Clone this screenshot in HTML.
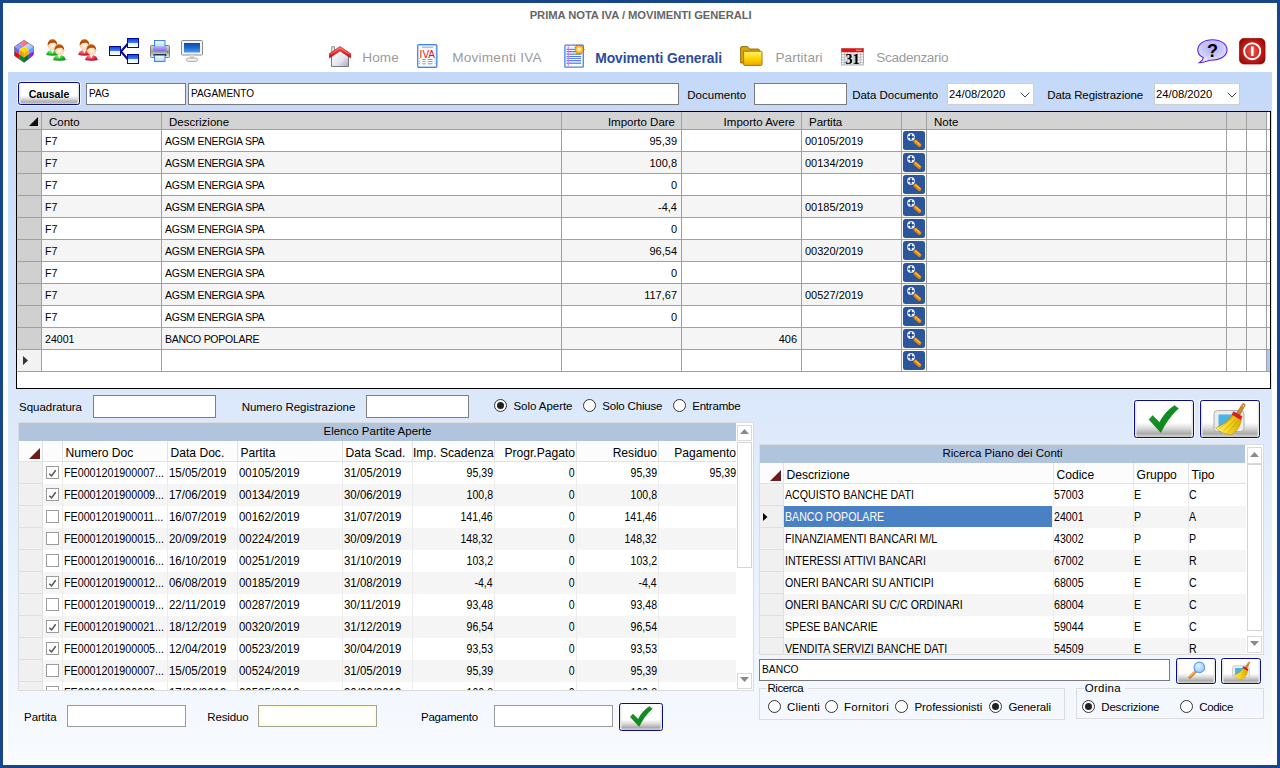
<!DOCTYPE html><html lang="it"><head><meta charset="utf-8"><title>Prima Nota IVA / Movimenti Generali</title><style>
*{box-sizing:border-box;margin:0;padding:0}
html,body{width:1280px;height:768px;overflow:hidden;background:#fff}
body{position:relative;font-family:"Liberation Sans",sans-serif;font-size:11.5px;color:#000}
.abs{position:absolute}
#frame{position:absolute;left:0;top:0;width:1280px;height:768px;border:3px solid #18468b;pointer-events:none;z-index:50}
#panel{position:absolute;left:8px;top:72px;width:1264px;height:688px;background:linear-gradient(to bottom,#c4d9f8 0%,#dbe8fb 47%,#f8fbff 100%)}
.t{position:absolute;white-space:nowrap;line-height:14px;height:14px}
.lbl{font-size:11.5px;color:#000}
.nav{font-size:13.6px;color:#9b9b9b;line-height:16px;height:16px}
.in{position:absolute;background:#fff;border:1px solid #7a7a7a}
.btn{position:absolute;border:1px solid #0b0b8e;border-radius:2.5px;background:linear-gradient(to bottom,#fff 0%,#fff 60%,#dcdcdc 75%,#aaa 91%,#c2c2be 95%,#cfcfca 100%);box-shadow:inset 1.5px 0 0 #e6e6e2,inset -1.5px 0 0 #e6e6e2,0 0 0 1px rgba(255,255,255,.65)}
/* top grid */
#g1{position:absolute;left:16px;top:111px;width:1255px;height:278px;border:1px solid #000;background:#fff;overflow:hidden}
#g1 .c{position:absolute;border-right:1px solid #a0a0a0;border-bottom:1px solid #a0a0a0;height:22px;font-size:11px;line-height:23px;white-space:nowrap;overflow:hidden}
#g1 .h{background:#d3d3d3;height:18px;line-height:21px;font-size:11.5px}
#g1 .rh{background:#d0d0d0}
#g1 .alt{background:#f5f5f5}
#g1 .r{text-align:right;padding-right:4px}
#g1 .l{padding-left:3px}
.zb{position:absolute;left:1px;top:1px;width:22px;height:19px;border-radius:2.5px;background:#2b579a}
/* lower grids */
.g2{position:absolute;background:#fff;border:1px solid #dcdcdc;overflow:hidden}
.g2 .band{position:absolute;left:0;top:0;height:18px;background:#b0c4de;text-align:center;font-size:11.5px;line-height:17px}
.g2 .c{position:absolute;height:22px;font-size:11.4px;line-height:22px;white-space:nowrap;overflow:hidden;border-right:1px solid #ececec}
.g2 .h{background:#fcfcfc;height:21px;line-height:24px;font-size:12.1px;border-bottom:1px solid #e2e2e2;border-right:1px solid #e2e2e2}
.g2 .rh{background:#f0f0f0;border-right:1px solid #e0e0e0;border-bottom:1px solid #e0e0e0}
.g2 .alt{background:#f5f5f5}
.g2 .r{text-align:right;padding-right:1px}
.g2 .d{display:inline-block}
.g2 .nd{font-size:12px;transform:scaleX(.892);transform-origin:0 50%}
.g2 .dd{font-size:12px;transform:scaleX(.955);transform-origin:0 50%}
.g2 .dr{font-size:12px;transform:scaleX(.88);transform-origin:100% 50%}
.g2 .ds{font-size:12px;transform:scaleX(.885);transform-origin:0 50%}
.g2 .dn{margin-left:-.6px;font-size:12px;transform:scaleX(.885);transform-origin:0 50%}
.g2 .l{padding-left:1px}
.g2 .h.l{padding-left:2.5px}
.cb{position:absolute;width:13px;height:13px;border:1px solid #9c9c9c;background:#fff}
.sb{position:absolute;background:#fff;border:1px solid #d4d4d4}
.sbb{position:absolute;background:#fff;border:1px solid #d9d9d9}
.radio{position:absolute;width:13px;height:13px;border:1px solid #333;border-radius:50%;background:#fff}
.radio.on::after{content:"";position:absolute;left:2px;top:2px;width:7px;height:7px;border-radius:50%;background:#222}
.grp{position:absolute;border:1px solid #dcdcdc}
</style></head><body>
<svg width="0" height="0" style="position:absolute"><defs>
<linearGradient id="gBox" x1="0" y1="0" x2="0" y2="1"><stop offset="0" stop-color="#0a3fe0"/><stop offset=".45" stop-color="#3f78f0"/><stop offset=".55" stop-color="#e8f0ff"/><stop offset="1" stop-color="#fff"/></linearGradient>
<radialGradient id="gSkin" cx=".5" cy=".55" r=".6"><stop offset="0" stop-color="#fff6ea"/><stop offset=".6" stop-color="#fbd9b5"/><stop offset="1" stop-color="#e9a66a"/></radialGradient>
<radialGradient id="gGreen" cx=".4" cy=".3" r=".8"><stop offset="0" stop-color="#7df07a"/><stop offset=".6" stop-color="#18b51c"/><stop offset="1" stop-color="#0a7a10"/></radialGradient>
<radialGradient id="gRed" cx=".4" cy=".3" r=".8"><stop offset="0" stop-color="#ff8a9a"/><stop offset=".6" stop-color="#e0203a"/><stop offset="1" stop-color="#a00a20"/></radialGradient>
<linearGradient id="gHair" x1="0" y1="0" x2="0" y2="1"><stop offset="0" stop-color="#c8600a"/><stop offset="1" stop-color="#8a3a05"/></linearGradient>
<radialGradient id="gPow" cx=".5" cy=".5" r=".6"><stop offset="0" stop-color="#f06050"/><stop offset=".55" stop-color="#c8201a"/><stop offset="1" stop-color="#980808"/></radialGradient>
<radialGradient id="gHelp" cx=".5" cy=".35" r=".7"><stop offset="0" stop-color="#a8a8f8"/><stop offset=".6" stop-color="#d0d0fb"/><stop offset="1" stop-color="#f4f4ff"/></radialGradient>
<linearGradient id="gFold" x1="0" y1="0" x2="0" y2="1"><stop offset="0" stop-color="#fff27a"/><stop offset=".5" stop-color="#ffd700"/><stop offset="1" stop-color="#f0a400"/></linearGradient>
<linearGradient id="gScr" x1="0" y1="0" x2="0" y2="1"><stop offset="0" stop-color="#0a4ab0"/><stop offset=".5" stop-color="#1c6ad0"/><stop offset="1" stop-color="#4a9af0"/></linearGradient>
<linearGradient id="gWall" x1="0" y1="0" x2="1" y2="1"><stop offset="0" stop-color="#fff"/><stop offset=".6" stop-color="#e4e4ee"/><stop offset="1" stop-color="#a8a8c0"/></linearGradient>
<linearGradient id="gRoof" x1="0" y1="0" x2="0" y2="1"><stop offset="0" stop-color="#ff5a5a"/><stop offset="1" stop-color="#c80000"/></linearGradient>
<linearGradient id="gPrn" x1="0" y1="0" x2="0" y2="1"><stop offset="0" stop-color="#d8d8d8"/><stop offset=".5" stop-color="#a0a0a0"/><stop offset="1" stop-color="#e8e8e8"/></linearGradient>
<linearGradient id="gPap" x1="0" y1="0" x2="0" y2="1"><stop offset="0" stop-color="#fff"/><stop offset="1" stop-color="#a8d4ff"/></linearGradient>
<linearGradient id="gLav" x1="0" y1="0" x2="0" y2="1"><stop offset="0" stop-color="#b8a8f8"/><stop offset="1" stop-color="#7a6ae0"/></linearGradient>
<linearGradient id="gChk" x1="0" y1="0" x2="1" y2="1"><stop offset="0" stop-color="#18a028"/><stop offset="1" stop-color="#0a7a18"/></linearGradient>
<radialGradient id="gLens" cx=".4" cy=".35" r=".7"><stop offset="0" stop-color="#e8f4ff"/><stop offset="1" stop-color="#8ec0ff"/></radialGradient>
<linearGradient id="gBroom" x1="0" y1="0" x2="1" y2="0"><stop offset="0" stop-color="#fff080"/><stop offset=".5" stop-color="#f8d820"/><stop offset="1" stop-color="#d8a800"/></linearGradient>
<linearGradient id="cPink" x1="0" y1="0" x2="1" y2="1"><stop offset="0" stop-color="#ffa0a4"/><stop offset="1" stop-color="#f85058"/></linearGradient>
<linearGradient id="cPeri" x1="0" y1="0" x2="1" y2="1"><stop offset="0" stop-color="#b4b4ff"/><stop offset="1" stop-color="#7c7cf0"/></linearGradient>
<linearGradient id="cSky" x1="0" y1="0" x2="1" y2="1"><stop offset="0" stop-color="#d8ecff"/><stop offset="1" stop-color="#78b4ff"/></linearGradient>
<linearGradient id="cYel" x1="0" y1="0" x2="1" y2="1"><stop offset="0" stop-color="#fff000"/><stop offset="1" stop-color="#ffc400"/></linearGradient>
</defs></svg>
<div id="panel"></div>
<div class="t ttl" style="left:529.7px;top:8px;font-weight:bold;font-size:11.2px;color:#666;letter-spacing:.02px;letter-spacing:-0.04px">PRIMA NOTA IVA / MOVIMENTI GENERALI</div>
<svg class="abs" style="left:14px;top:39.5px;" width="20" height="23" viewBox="0 0 20 23"><polygon points="10.06,0.3 14.75,3.34 10.06,6.46 5.18,3.34" fill="url(#cPink)"/><polygon points="5.18,3.34 10.06,6.46 5.18,9.59 0.4,6.85" fill="url(#cPeri)"/><polygon points="14.75,3.34 19.6,6.46 14.75,9.59 10.06,6.46" fill="url(#cSky)"/><polygon points="10.06,6.46 14.75,9.59 10.06,12.7 5.18,9.59" fill="url(#cYel)"/><polygon points="0.4,6.85 5.18,9.59 5.18,14.08 0.4,11.27" fill="#6a68e2"/><polygon points="5.18,9.59 10.06,12.7 10.06,17.6 5.18,14.08" fill="#f0a200"/><polygon points="0.4,11.27 5.18,14.08 5.18,18.96 0.4,15.64" fill="#f00608"/><polygon points="5.18,14.08 10.06,17.6 10.06,22.4 5.18,18.96" fill="#0a8a2a"/><polygon points="10.06,12.7 14.75,9.59 14.75,14.08 10.06,17.6" fill="#ffb400"/><polygon points="14.75,9.59 19.6,6.46 19.6,10.95 14.75,14.08" fill="#5ea4ff"/><polygon points="10.06,17.6 14.75,14.08 14.75,18.96 10.06,22.4" fill="#087024"/><polygon points="14.75,14.08 19.6,10.95 19.6,14.86 14.75,18.96" fill="#8a22ff"/><polygon points="10.06,0.3 19.6,6.46 19.6,14.86 10.06,22.4 0.4,15.64 0.4,6.85" fill="none" stroke="#4a4a78" stroke-width=".7" stroke-opacity=".8"/></svg>
<svg class="abs" style="left:46px;top:39px;" width="22" height="23" viewBox="0 0 22 23"><ellipse cx="14" cy="20.8" rx="8" ry="1.5" fill="#000" opacity=".13"/><path d="M0.40000000000000036,16.1 Q0.40000000000000036,11.1 6.5,10.9 Q12.6,11.1 12.6,16.1 Q6.5,17.3 0.40000000000000036,16.1Z" fill="url(#gGreen)"/>
<polygon points="4.8,10.7 8.2,10.7 6.5,14.5" fill="#fff"/>
<ellipse cx="6.5" cy="6.4" rx="4.4" ry="4.9" fill="url(#gSkin)"/>
<path d="M1.7000000000000002,6.9 C1.0999999999999996,-1.9000000000000004 11.9,-1.9000000000000004 11.3,6.9 C10.5,3.5 7.5,3.7 5.5,3.9 C3.5,4.1 2.3,5.1 1.7000000000000002,6.9Z" fill="url(#gHair)"/><path d="M7.300000000000001,21.1 Q7.300000000000001,16.1 13.4,15.9 Q19.5,16.1 19.5,21.1 Q13.4,22.3 7.300000000000001,21.1Z" fill="url(#gGreen)"/>
<polygon points="11.700000000000001,15.7 15.1,15.7 13.4,19.5" fill="#fff"/>
<ellipse cx="13.4" cy="11.4" rx="4.4" ry="4.9" fill="url(#gSkin)"/>
<path d="M8.600000000000001,11.9 C8.0,3.0999999999999996 18.8,3.0999999999999996 18.2,11.9 C17.4,8.5 14.4,8.7 12.4,8.9 C10.4,9.1 9.2,10.1 8.600000000000001,11.9Z" fill="url(#gHair)"/></svg>
<svg class="abs" style="left:78px;top:39px;" width="22" height="23" viewBox="0 0 22 23"><ellipse cx="14" cy="20.8" rx="8" ry="1.5" fill="#000" opacity=".13"/><path d="M0.40000000000000036,16.1 Q0.40000000000000036,11.1 6.5,10.9 Q12.6,11.1 12.6,16.1 Q6.5,17.3 0.40000000000000036,16.1Z" fill="url(#gRed)"/>
<polygon points="4.8,10.7 8.2,10.7 6.5,14.5" fill="#fff"/>
<ellipse cx="6.5" cy="6.4" rx="4.4" ry="4.9" fill="url(#gSkin)"/>
<path d="M1.7000000000000002,6.9 C1.0999999999999996,-1.9000000000000004 11.9,-1.9000000000000004 11.3,6.9 C10.5,3.5 7.5,3.7 5.5,3.9 C3.5,4.1 2.3,5.1 1.7000000000000002,6.9Z" fill="url(#gHair)"/><path d="M7.300000000000001,21.1 Q7.300000000000001,16.1 13.4,15.9 Q19.5,16.1 19.5,21.1 Q13.4,22.3 7.300000000000001,21.1Z" fill="url(#gRed)"/>
<polygon points="11.700000000000001,15.7 15.1,15.7 13.4,19.5" fill="#fff"/>
<ellipse cx="13.4" cy="11.4" rx="4.4" ry="4.9" fill="url(#gSkin)"/>
<path d="M8.600000000000001,11.9 C8.0,3.0999999999999996 18.8,3.0999999999999996 18.2,11.9 C17.4,8.5 14.4,8.7 12.4,8.9 C10.4,9.1 9.2,10.1 8.600000000000001,11.9Z" fill="url(#gHair)"/></svg>
<svg class="abs" style="left:109px;top:38px;" width="30" height="26" viewBox="0 0 30 26"><path d="M12,13.5 L19,5.5 M12,13.5 L19,21.5" stroke="#0a0a8c" stroke-width="2.1" fill="none"/>
<rect x=".5" y="8.5" width="11" height="9" fill="url(#gBox)" stroke="#000a96" stroke-width="1"/>
<rect x="18.5" y=".5" width="11" height="9" fill="url(#gBox)" stroke="#000a96" stroke-width="1"/>
<rect x="18.5" y="16.5" width="11" height="9" fill="url(#gBox)" stroke="#000a96" stroke-width="1"/></svg>
<svg class="abs" style="left:150px;top:40px;" width="21" height="23" viewBox="0 0 21 23"><rect x=".5" y="5.5" width="19" height="12" rx="1" fill="url(#gPrn)" stroke="#666" stroke-width=".8"/>
<rect x="4.5" y=".5" width="10.5" height="7" fill="url(#gPap)" stroke="#2a7af0" stroke-width=".9"/>
<rect x="3.2" y="6.5" width="13.4" height="5" rx="1.5" fill="url(#gLav)"/>
<rect x="3.5" y="14" width="12.8" height="2" fill="#222"/>
<rect x="4.5" y="15.2" width="10.5" height="6.3" fill="url(#gPap)" stroke="#2a7af0" stroke-width=".9"/>
<circle cx="17.6" cy="12" r=".9" fill="#30b020"/></svg>
<svg class="abs" style="left:181px;top:40px;" width="22" height="22" viewBox="0 0 22 22"><rect x=".5" y=".5" width="21" height="14.5" rx=".8" fill="#f4f4f4" stroke="#8c8c98" stroke-width="1"/>
<rect x="3" y="3" width="16" height="9.5" fill="url(#gScr)"/>
<path d="M9,15 h4 v3.5 h-4z" fill="#d8d8d8"/>
<rect x="5.5" y="18" width="11" height="3.4" rx="1.7" fill="#f0f0f0" stroke="#9a9aa6" stroke-width=".8"/></svg>
<svg class="abs" style="left:329px;top:46px;" width="22" height="21" viewBox="0 0 22 21"><rect x="2.8" y=".8" width="2.6" height="6" fill="#e8e8f0" stroke="#666" stroke-width=".7"/>
<path d="M2.5,9.5 L11,3.5 L19.5,9.5 V20.5 H2.5Z" fill="url(#gWall)" stroke="#5a5a66" stroke-width=".8"/>
<path d="M0.3,7.7 L11,.4 L21.7,7.7 L21.7,12.1 L11,4.9 L0.3,12.1Z" fill="url(#gRoof)" stroke="#b00000" stroke-width=".5"/><path d="M1.4,8.4 L11,1.9 L20.6,8.4" fill="none" stroke="#ffb0b0" stroke-width=".7" opacity=".8"/></svg>
<div class="t nav" style="left:362.3px;top:50px;;letter-spacing:0.045px">Home</div>
<svg class="abs" style="left:417.3px;top:44px;" width="21" height="24" viewBox="0 0 21 24"><rect x=".8" y=".8" width="19" height="22.4" rx="1" fill="#fff" stroke="#3a82f0" stroke-width="1.4"/>
<rect x="1.8" y="1.8" width="17" height="20.4" fill="none" stroke="#cfe2ff" stroke-width=".8"/>
<path d="M5,3.2 H16" stroke="#888" stroke-width=".8"/>
<text x="10.3" y="14.2" font-family="Liberation Sans, sans-serif" font-size="11.6" text-anchor="middle" fill="#e01020" textLength="15.4" lengthAdjust="spacingAndGlyphs">IVA</text>
<path d="M5.4,15.5 H8.6 M10.6,15.5 H15.6 M5.4,17.6 H8.6 M10.6,17.6 H15.6 M5.4,19.8 H8.6 M10.6,19.8 H15.6" stroke="#999" stroke-width="1"/>
<path d="M2.6,14.4 V20.6 M18,14.4 V20.6" stroke="#3a82f0" stroke-width=".7" stroke-dasharray=".8 1.6"/></svg>
<div class="t nav" style="left:452.2px;top:50px;;letter-spacing:0.231px">Movimenti IVA</div>
<svg class="abs" style="left:564px;top:44px;" width="22" height="24" viewBox="0 0 22 24"><rect x=".9" y="1.2" width="18.4" height="21.9" rx=".6" fill="#fff" stroke="#3f86f2" stroke-width="1.3"/>
<rect x="2.5" y="7.5" width="14.6" height="2.7" fill="#d4e2ff"/><rect x="2.5" y="16.6" width="14.6" height="2.7" fill="#d4e2ff"/><rect x="2.5" y="3" width="9" height="2.2" fill="#e4f0ff"/>
<path d="M2.5,5.4 H17.1 M2.5,7.5 H17.1 M2.5,10.2 H17.1 M2.5,12.5 H17.1 M2.5,14.4 H17.1 M2.5,16.6 H17.1 M2.5,19.3 H17.1" stroke="#4a78f0" stroke-width="1"/>
<path d="M4.3,1.8 V22.4" stroke="#e070f0" stroke-width=".9"/>
<polygon points="15.30,-0.50 16.26,1.83 18.25,0.29 17.92,2.78 20.41,2.45 18.87,4.44 21.20,5.40 18.87,6.36 20.41,8.35 17.92,8.02 18.25,10.51 16.26,8.97 15.30,11.30 14.34,8.97 12.35,10.51 12.68,8.02 10.19,8.35 11.73,6.36 9.40,5.40 11.73,4.44 10.19,2.45 12.68,2.78 12.35,0.29 14.34,1.83" fill="#ee5000"/>
<circle cx="15.3" cy="5.4" r="3.9" fill="#ff9a10"/><circle cx="15.3" cy="5.4" r="3" fill="#ffd820"/><circle cx="15.2" cy="5.3" r="1.7" fill="#fffbe0"/></svg>
<div class="t nav" style="left:595.2px;top:50px;font-weight:bold;color:#2b4c9c;font-size:13.85px;letter-spacing:-0.042px">Movimenti Generali</div>
<svg class="abs" style="left:740px;top:46px;" width="23" height="20" viewBox="0 0 23 20"><path d="M.6,2 Q.6,.6 2,.6 H7.5 L9.5,3 H18 Q19.5,3 19.5,4.5 V17 H.6Z" fill="#dca400" stroke="#8a6408" stroke-width=".9"/>
<path d="M3.6,5.2 H21 Q22,5.2 22,6.2 V18.2 Q22,19.4 21,19.4 H4.6 Q3.6,19.4 3.6,18.2Z" fill="url(#gFold)" stroke="#96700a" stroke-width=".9"/></svg>
<div class="t nav" style="left:775.5px;top:50px;;letter-spacing:0.032px">Partitari</div>
<svg class="abs" style="left:841.4px;top:47.6px;" width="23" height="18" viewBox="0 0 23 18"><rect x=".4" y=".4" width="22.2" height="16.6" fill="#f4f4f4" stroke="#888" stroke-width=".6"/>
<path d="M.4,6.5H22.6M.4,9.2H22.6M.4,11.9H22.6M.4,14.5H22.6M3.4,4V17M6.6,4V17M9.8,4V17M13,4V17M16.2,4V17M19.4,4V17" stroke="#999" stroke-width=".5"/>
<rect x=".4" y=".4" width="22.2" height="3.8" fill="#e81010"/>
<path d="M15,2.2 H20.5" stroke="#ffb0b0" stroke-width=".9"/>
<text x="11.5" y="15.6" font-family="Liberation Serif, serif" font-weight="bold" font-size="14.5" text-anchor="middle" fill="#000">31</text></svg>
<div class="t nav" style="left:876.2px;top:50px;;letter-spacing:-0.318px">Scadenzario</div>
<svg class="abs" style="left:1196.6px;top:38.6px;" width="31" height="25" viewBox="0 0 31 25"><path d="M15.5,.8 C24,.8 30,5 30,11 C30,17.5 22,21.6 13,21.2 C10.5,22 6,23.4 2.4,23.6 C5,21.8 6.2,20 6.2,18.6 C2.6,16.8 .8,14 .8,11 C.8,5 7,.8 15.5,.8Z" fill="url(#gHelp)" stroke="#5a20e8" stroke-width="1.1"/>
<text x="15.4" y="18.4" font-family="Liberation Sans, sans-serif" font-weight="bold" font-size="18" text-anchor="middle" fill="#000">?</text></svg>
<svg class="abs" style="left:1239px;top:37.8px;" width="27" height="27" viewBox="0 0 27 27"><rect x=".3" y=".3" width="25.8" height="25.8" rx="5" fill="url(#gPow)" stroke="#900" stroke-width=".6"/>
<circle cx="13.2" cy="13.2" r="8" fill="none" stroke="#fff" stroke-width="1.9"/>
<rect x="12" y="8.4" width="2.6" height="9.6" fill="#fff"/></svg>
<div class="btn" style="left:18px;top:82px;width:62px;height:23px;text-align:center;font-weight:bold;font-size:10.6px;line-height:22px">Causale</div>
<div class="in" style="left:86px;top:83px;width:100px;height:22px;"><span class="t" style="left:2px;top:3px;font-size:10px">PAG</span></div>
<div class="in" style="left:188px;top:83px;width:491px;height:22px;"><span class="t" style="left:2px;top:3px;font-size:10px">PAGAMENTO</span></div>
<div class="t lbl" style="left:687.2px;top:87.5px;;letter-spacing:0.023px">Documento</div>
<div class="in" style="left:754px;top:83px;width:93px;height:22px;"></div>
<div class="t lbl" style="left:852.2px;top:87.5px;;letter-spacing:-0.023px">Data Documento</div>
<div class="in" style="left:947px;top:83px;width:87px;height:22px;border-color:#cfcfcf"><span class="t" style="left:1px;top:3px;font-size:11.25px">24/08/2020</span><svg class="abs" style="left:72px;top:8px" width="10" height="6" viewBox="0 0 10 6"><path d="M.7,.7 L5,5 L9.3,.7" fill="none" stroke="#444" stroke-width="1"/></svg></div>
<div class="t lbl" style="left:1047.2px;top:87.5px;;letter-spacing:-0.107px">Data Registrazione</div>
<div class="in" style="left:1154px;top:83px;width:86px;height:22px;border-color:#cfcfcf"><span class="t" style="left:1px;top:3px;font-size:11.25px">24/08/2020</span><svg class="abs" style="left:72px;top:8px" width="10" height="6" viewBox="0 0 10 6"><path d="M.7,.7 L5,5 L9.3,.7" fill="none" stroke="#444" stroke-width="1"/></svg></div>
<div id="g1">
<div class="c h l" style="left:0px;top:0;width:25px;padding-left:7px"><svg class="abs" style="left:12px;top:5px" width="9" height="9" viewBox="0 0 9 9"><polygon points="9,0 9,9 0,9" fill="#111"/></svg></div>
<div class="c h l" style="left:25px;top:0;width:120px;padding-left:7px">Conto</div>
<div class="c h l" style="left:145px;top:0;width:400px;padding-left:7px">Descrizione</div>
<div class="c h r" style="left:545px;top:0;width:120px;padding-right:6px">Importo Dare</div>
<div class="c h r" style="left:665px;top:0;width:120px;padding-right:6px">Importo Avere</div>
<div class="c h l" style="left:785px;top:0;width:100px;padding-left:7px">Partita</div>
<div class="c h l" style="left:885px;top:0;width:25px;padding-left:7px"></div>
<div class="c h l" style="left:910px;top:0;width:300px;padding-left:7px">Note</div>
<div class="c h l" style="left:1210px;top:0;width:20px;padding-left:7px"></div>
<div class="c h l" style="left:1230px;top:0;width:20px;padding-left:7px"></div>
<div class="c h l" style="left:1250px;top:0;width:30px;padding-left:7px;background:#f8f8f8"></div>
<div class="c rh" style="left:0px;top:18px;width:25px;"></div>
<div class="c l" style="left:25px;top:18px;width:120px;font-size:10.6px;">F7</div>
<div class="c l" style="left:145px;top:18px;width:400px;font-size:10.5px;letter-spacing:-.27px;">AGSM ENERGIA SPA</div>
<div class="c r" style="left:545px;top:18px;width:120px;">95,39</div>
<div class="c r" style="left:665px;top:18px;width:120px;"></div>
<div class="c l" style="left:785px;top:18px;width:100px;">00105/2019</div>
<div class="c" style="left:885px;top:18px;width:25px;"><span class="zb"><svg width="22" height="19" viewBox="0 0 22 19" style="position:absolute;left:0;top:0"><path d="M12.3,10.5 L16.5,14.1" stroke="#e08a14" stroke-width="3.7" stroke-linecap="round"/><path d="M12.5,9.9 L16.9,13.6" stroke="#ffc050" stroke-width="1.2" stroke-linecap="round"/><circle cx="8" cy="5.9" r="4.6" fill="#2a3ec4"/><circle cx="8" cy="5.9" r="3.9" fill="#dcefff"/><circle cx="7.7" cy="5.5" r="2.7" fill="#fff"/><path d="M5.1,5.9H10.9M8,3V8.8" stroke="#0b3c80" stroke-width="1.5"/></svg></span></div>
<div class="c l" style="left:910px;top:18px;width:300px;"></div>
<div class="c l" style="left:1210px;top:18px;width:20px;"></div>
<div class="c l" style="left:1230px;top:18px;width:20px;"></div>
<div class="c l" style="left:1250px;top:18px;width:30px;"></div>
<div class="c rh" style="left:0px;top:40px;width:25px;"></div>
<div class="c alt l" style="left:25px;top:40px;width:120px;font-size:10.6px;">F7</div>
<div class="c alt l" style="left:145px;top:40px;width:400px;font-size:10.5px;letter-spacing:-.27px;">AGSM ENERGIA SPA</div>
<div class="c alt r" style="left:545px;top:40px;width:120px;">100,8</div>
<div class="c alt r" style="left:665px;top:40px;width:120px;"></div>
<div class="c alt l" style="left:785px;top:40px;width:100px;">00134/2019</div>
<div class="c alt" style="left:885px;top:40px;width:25px;"><span class="zb"><svg width="22" height="19" viewBox="0 0 22 19" style="position:absolute;left:0;top:0"><path d="M12.3,10.5 L16.5,14.1" stroke="#e08a14" stroke-width="3.7" stroke-linecap="round"/><path d="M12.5,9.9 L16.9,13.6" stroke="#ffc050" stroke-width="1.2" stroke-linecap="round"/><circle cx="8" cy="5.9" r="4.6" fill="#2a3ec4"/><circle cx="8" cy="5.9" r="3.9" fill="#dcefff"/><circle cx="7.7" cy="5.5" r="2.7" fill="#fff"/><path d="M5.1,5.9H10.9M8,3V8.8" stroke="#0b3c80" stroke-width="1.5"/></svg></span></div>
<div class="c alt l" style="left:910px;top:40px;width:300px;"></div>
<div class="c alt l" style="left:1210px;top:40px;width:20px;"></div>
<div class="c alt l" style="left:1230px;top:40px;width:20px;"></div>
<div class="c alt l" style="left:1250px;top:40px;width:30px;"></div>
<div class="c rh" style="left:0px;top:62px;width:25px;"></div>
<div class="c l" style="left:25px;top:62px;width:120px;font-size:10.6px;">F7</div>
<div class="c l" style="left:145px;top:62px;width:400px;font-size:10.5px;letter-spacing:-.27px;">AGSM ENERGIA SPA</div>
<div class="c r" style="left:545px;top:62px;width:120px;">0</div>
<div class="c r" style="left:665px;top:62px;width:120px;"></div>
<div class="c l" style="left:785px;top:62px;width:100px;"></div>
<div class="c" style="left:885px;top:62px;width:25px;"><span class="zb"><svg width="22" height="19" viewBox="0 0 22 19" style="position:absolute;left:0;top:0"><path d="M12.3,10.5 L16.5,14.1" stroke="#e08a14" stroke-width="3.7" stroke-linecap="round"/><path d="M12.5,9.9 L16.9,13.6" stroke="#ffc050" stroke-width="1.2" stroke-linecap="round"/><circle cx="8" cy="5.9" r="4.6" fill="#2a3ec4"/><circle cx="8" cy="5.9" r="3.9" fill="#dcefff"/><circle cx="7.7" cy="5.5" r="2.7" fill="#fff"/><path d="M5.1,5.9H10.9M8,3V8.8" stroke="#0b3c80" stroke-width="1.5"/></svg></span></div>
<div class="c l" style="left:910px;top:62px;width:300px;"></div>
<div class="c l" style="left:1210px;top:62px;width:20px;"></div>
<div class="c l" style="left:1230px;top:62px;width:20px;"></div>
<div class="c l" style="left:1250px;top:62px;width:30px;"></div>
<div class="c rh" style="left:0px;top:84px;width:25px;"></div>
<div class="c alt l" style="left:25px;top:84px;width:120px;font-size:10.6px;">F7</div>
<div class="c alt l" style="left:145px;top:84px;width:400px;font-size:10.5px;letter-spacing:-.27px;">AGSM ENERGIA SPA</div>
<div class="c alt r" style="left:545px;top:84px;width:120px;">-4,4</div>
<div class="c alt r" style="left:665px;top:84px;width:120px;"></div>
<div class="c alt l" style="left:785px;top:84px;width:100px;">00185/2019</div>
<div class="c alt" style="left:885px;top:84px;width:25px;"><span class="zb"><svg width="22" height="19" viewBox="0 0 22 19" style="position:absolute;left:0;top:0"><path d="M12.3,10.5 L16.5,14.1" stroke="#e08a14" stroke-width="3.7" stroke-linecap="round"/><path d="M12.5,9.9 L16.9,13.6" stroke="#ffc050" stroke-width="1.2" stroke-linecap="round"/><circle cx="8" cy="5.9" r="4.6" fill="#2a3ec4"/><circle cx="8" cy="5.9" r="3.9" fill="#dcefff"/><circle cx="7.7" cy="5.5" r="2.7" fill="#fff"/><path d="M5.1,5.9H10.9M8,3V8.8" stroke="#0b3c80" stroke-width="1.5"/></svg></span></div>
<div class="c alt l" style="left:910px;top:84px;width:300px;"></div>
<div class="c alt l" style="left:1210px;top:84px;width:20px;"></div>
<div class="c alt l" style="left:1230px;top:84px;width:20px;"></div>
<div class="c alt l" style="left:1250px;top:84px;width:30px;"></div>
<div class="c rh" style="left:0px;top:106px;width:25px;"></div>
<div class="c l" style="left:25px;top:106px;width:120px;font-size:10.6px;">F7</div>
<div class="c l" style="left:145px;top:106px;width:400px;font-size:10.5px;letter-spacing:-.27px;">AGSM ENERGIA SPA</div>
<div class="c r" style="left:545px;top:106px;width:120px;">0</div>
<div class="c r" style="left:665px;top:106px;width:120px;"></div>
<div class="c l" style="left:785px;top:106px;width:100px;"></div>
<div class="c" style="left:885px;top:106px;width:25px;"><span class="zb"><svg width="22" height="19" viewBox="0 0 22 19" style="position:absolute;left:0;top:0"><path d="M12.3,10.5 L16.5,14.1" stroke="#e08a14" stroke-width="3.7" stroke-linecap="round"/><path d="M12.5,9.9 L16.9,13.6" stroke="#ffc050" stroke-width="1.2" stroke-linecap="round"/><circle cx="8" cy="5.9" r="4.6" fill="#2a3ec4"/><circle cx="8" cy="5.9" r="3.9" fill="#dcefff"/><circle cx="7.7" cy="5.5" r="2.7" fill="#fff"/><path d="M5.1,5.9H10.9M8,3V8.8" stroke="#0b3c80" stroke-width="1.5"/></svg></span></div>
<div class="c l" style="left:910px;top:106px;width:300px;"></div>
<div class="c l" style="left:1210px;top:106px;width:20px;"></div>
<div class="c l" style="left:1230px;top:106px;width:20px;"></div>
<div class="c l" style="left:1250px;top:106px;width:30px;"></div>
<div class="c rh" style="left:0px;top:128px;width:25px;"></div>
<div class="c alt l" style="left:25px;top:128px;width:120px;font-size:10.6px;">F7</div>
<div class="c alt l" style="left:145px;top:128px;width:400px;font-size:10.5px;letter-spacing:-.27px;">AGSM ENERGIA SPA</div>
<div class="c alt r" style="left:545px;top:128px;width:120px;">96,54</div>
<div class="c alt r" style="left:665px;top:128px;width:120px;"></div>
<div class="c alt l" style="left:785px;top:128px;width:100px;">00320/2019</div>
<div class="c alt" style="left:885px;top:128px;width:25px;"><span class="zb"><svg width="22" height="19" viewBox="0 0 22 19" style="position:absolute;left:0;top:0"><path d="M12.3,10.5 L16.5,14.1" stroke="#e08a14" stroke-width="3.7" stroke-linecap="round"/><path d="M12.5,9.9 L16.9,13.6" stroke="#ffc050" stroke-width="1.2" stroke-linecap="round"/><circle cx="8" cy="5.9" r="4.6" fill="#2a3ec4"/><circle cx="8" cy="5.9" r="3.9" fill="#dcefff"/><circle cx="7.7" cy="5.5" r="2.7" fill="#fff"/><path d="M5.1,5.9H10.9M8,3V8.8" stroke="#0b3c80" stroke-width="1.5"/></svg></span></div>
<div class="c alt l" style="left:910px;top:128px;width:300px;"></div>
<div class="c alt l" style="left:1210px;top:128px;width:20px;"></div>
<div class="c alt l" style="left:1230px;top:128px;width:20px;"></div>
<div class="c alt l" style="left:1250px;top:128px;width:30px;"></div>
<div class="c rh" style="left:0px;top:150px;width:25px;"></div>
<div class="c l" style="left:25px;top:150px;width:120px;font-size:10.6px;">F7</div>
<div class="c l" style="left:145px;top:150px;width:400px;font-size:10.5px;letter-spacing:-.27px;">AGSM ENERGIA SPA</div>
<div class="c r" style="left:545px;top:150px;width:120px;">0</div>
<div class="c r" style="left:665px;top:150px;width:120px;"></div>
<div class="c l" style="left:785px;top:150px;width:100px;"></div>
<div class="c" style="left:885px;top:150px;width:25px;"><span class="zb"><svg width="22" height="19" viewBox="0 0 22 19" style="position:absolute;left:0;top:0"><path d="M12.3,10.5 L16.5,14.1" stroke="#e08a14" stroke-width="3.7" stroke-linecap="round"/><path d="M12.5,9.9 L16.9,13.6" stroke="#ffc050" stroke-width="1.2" stroke-linecap="round"/><circle cx="8" cy="5.9" r="4.6" fill="#2a3ec4"/><circle cx="8" cy="5.9" r="3.9" fill="#dcefff"/><circle cx="7.7" cy="5.5" r="2.7" fill="#fff"/><path d="M5.1,5.9H10.9M8,3V8.8" stroke="#0b3c80" stroke-width="1.5"/></svg></span></div>
<div class="c l" style="left:910px;top:150px;width:300px;"></div>
<div class="c l" style="left:1210px;top:150px;width:20px;"></div>
<div class="c l" style="left:1230px;top:150px;width:20px;"></div>
<div class="c l" style="left:1250px;top:150px;width:30px;"></div>
<div class="c rh" style="left:0px;top:172px;width:25px;"></div>
<div class="c alt l" style="left:25px;top:172px;width:120px;font-size:10.6px;">F7</div>
<div class="c alt l" style="left:145px;top:172px;width:400px;font-size:10.5px;letter-spacing:-.27px;">AGSM ENERGIA SPA</div>
<div class="c alt r" style="left:545px;top:172px;width:120px;">117,67</div>
<div class="c alt r" style="left:665px;top:172px;width:120px;"></div>
<div class="c alt l" style="left:785px;top:172px;width:100px;">00527/2019</div>
<div class="c alt" style="left:885px;top:172px;width:25px;"><span class="zb"><svg width="22" height="19" viewBox="0 0 22 19" style="position:absolute;left:0;top:0"><path d="M12.3,10.5 L16.5,14.1" stroke="#e08a14" stroke-width="3.7" stroke-linecap="round"/><path d="M12.5,9.9 L16.9,13.6" stroke="#ffc050" stroke-width="1.2" stroke-linecap="round"/><circle cx="8" cy="5.9" r="4.6" fill="#2a3ec4"/><circle cx="8" cy="5.9" r="3.9" fill="#dcefff"/><circle cx="7.7" cy="5.5" r="2.7" fill="#fff"/><path d="M5.1,5.9H10.9M8,3V8.8" stroke="#0b3c80" stroke-width="1.5"/></svg></span></div>
<div class="c alt l" style="left:910px;top:172px;width:300px;"></div>
<div class="c alt l" style="left:1210px;top:172px;width:20px;"></div>
<div class="c alt l" style="left:1230px;top:172px;width:20px;"></div>
<div class="c alt l" style="left:1250px;top:172px;width:30px;"></div>
<div class="c rh" style="left:0px;top:194px;width:25px;"></div>
<div class="c l" style="left:25px;top:194px;width:120px;font-size:10.6px;">F7</div>
<div class="c l" style="left:145px;top:194px;width:400px;font-size:10.5px;letter-spacing:-.27px;">AGSM ENERGIA SPA</div>
<div class="c r" style="left:545px;top:194px;width:120px;">0</div>
<div class="c r" style="left:665px;top:194px;width:120px;"></div>
<div class="c l" style="left:785px;top:194px;width:100px;"></div>
<div class="c" style="left:885px;top:194px;width:25px;"><span class="zb"><svg width="22" height="19" viewBox="0 0 22 19" style="position:absolute;left:0;top:0"><path d="M12.3,10.5 L16.5,14.1" stroke="#e08a14" stroke-width="3.7" stroke-linecap="round"/><path d="M12.5,9.9 L16.9,13.6" stroke="#ffc050" stroke-width="1.2" stroke-linecap="round"/><circle cx="8" cy="5.9" r="4.6" fill="#2a3ec4"/><circle cx="8" cy="5.9" r="3.9" fill="#dcefff"/><circle cx="7.7" cy="5.5" r="2.7" fill="#fff"/><path d="M5.1,5.9H10.9M8,3V8.8" stroke="#0b3c80" stroke-width="1.5"/></svg></span></div>
<div class="c l" style="left:910px;top:194px;width:300px;"></div>
<div class="c l" style="left:1210px;top:194px;width:20px;"></div>
<div class="c l" style="left:1230px;top:194px;width:20px;"></div>
<div class="c l" style="left:1250px;top:194px;width:30px;"></div>
<div class="c rh" style="left:0px;top:216px;width:25px;"></div>
<div class="c alt l" style="left:25px;top:216px;width:120px;font-size:10.6px;">24001</div>
<div class="c alt l" style="left:145px;top:216px;width:400px;font-size:10.5px;letter-spacing:-.27px;">BANCO POPOLARE</div>
<div class="c alt r" style="left:545px;top:216px;width:120px;"></div>
<div class="c alt r" style="left:665px;top:216px;width:120px;">406</div>
<div class="c alt l" style="left:785px;top:216px;width:100px;"></div>
<div class="c alt" style="left:885px;top:216px;width:25px;"><span class="zb"><svg width="22" height="19" viewBox="0 0 22 19" style="position:absolute;left:0;top:0"><path d="M12.3,10.5 L16.5,14.1" stroke="#e08a14" stroke-width="3.7" stroke-linecap="round"/><path d="M12.5,9.9 L16.9,13.6" stroke="#ffc050" stroke-width="1.2" stroke-linecap="round"/><circle cx="8" cy="5.9" r="4.6" fill="#2a3ec4"/><circle cx="8" cy="5.9" r="3.9" fill="#dcefff"/><circle cx="7.7" cy="5.5" r="2.7" fill="#fff"/><path d="M5.1,5.9H10.9M8,3V8.8" stroke="#0b3c80" stroke-width="1.5"/></svg></span></div>
<div class="c alt l" style="left:910px;top:216px;width:300px;"></div>
<div class="c alt l" style="left:1210px;top:216px;width:20px;"></div>
<div class="c alt l" style="left:1230px;top:216px;width:20px;"></div>
<div class="c alt l" style="left:1250px;top:216px;width:30px;"></div>
<div class="c rh" style="left:0px;top:238px;width:25px;background:#f2f2f2;"><svg class="abs" style="left:6px;top:6px" width="5" height="9" viewBox="0 0 5 9"><polygon points="0,0 5,4.5 0,9" fill="#333"/></svg></div>
<div class="c l" style="left:25px;top:238px;width:120px;font-size:10.6px;"></div>
<div class="c l" style="left:145px;top:238px;width:400px;font-size:10.5px;letter-spacing:-.27px;"></div>
<div class="c r" style="left:545px;top:238px;width:120px;"></div>
<div class="c r" style="left:665px;top:238px;width:120px;"></div>
<div class="c l" style="left:785px;top:238px;width:100px;"></div>
<div class="c" style="left:885px;top:238px;width:25px;"><span class="zb"><svg width="22" height="19" viewBox="0 0 22 19" style="position:absolute;left:0;top:0"><path d="M12.3,10.5 L16.5,14.1" stroke="#e08a14" stroke-width="3.7" stroke-linecap="round"/><path d="M12.5,9.9 L16.9,13.6" stroke="#ffc050" stroke-width="1.2" stroke-linecap="round"/><circle cx="8" cy="5.9" r="4.6" fill="#2a3ec4"/><circle cx="8" cy="5.9" r="3.9" fill="#dcefff"/><circle cx="7.7" cy="5.5" r="2.7" fill="#fff"/><path d="M5.1,5.9H10.9M8,3V8.8" stroke="#0b3c80" stroke-width="1.5"/></svg></span></div>
<div class="c l" style="left:910px;top:238px;width:300px;"></div>
<div class="c l" style="left:1210px;top:238px;width:20px;"></div>
<div class="c l" style="left:1230px;top:238px;width:20px;"></div>
<div class="c l" style="left:1250px;top:238px;width:30px;background:#a9c9f9;"></div>
</div>
<div class="g2" style="left:18px;top:422px;width:736px;height:269px">
<div class="band" style="width:717px">Elenco Partite Aperte</div>
<div class="c h l" style="left:0px;top:18px;width:24px"><svg class="abs" style="left:10px;top:7px" width="11" height="11" viewBox="0 0 11 11"><polygon points="11,0 11,11 0,11" fill="#6b1c1c"/></svg></div>
<div class="c h l" style="left:24px;top:18px;width:20px"></div>
<div class="c h l" style="left:44px;top:18px;width:105px">Numero Doc</div>
<div class="c h l" style="left:149px;top:18px;width:70px">Data Doc.</div>
<div class="c h l" style="left:219px;top:18px;width:105px">Partita</div>
<div class="c h l" style="left:324px;top:18px;width:70px">Data Scad.</div>
<div class="c h r" style="left:394px;top:18px;width:82px">Imp. Scadenza</div>
<div class="c h r" style="left:476px;top:18px;width:82px">Progr.Pagato</div>
<div class="c h r" style="left:558px;top:18px;width:82px">Residuo</div>
<div class="c h r" style="left:640px;top:18px;width:79px">Pagamento</div>
<div class="c rh" style="left:0;top:39px;width:24px"></div>
<div class="c" style="left:24px;top:39px;width:20px"><span class="cb" style="left:3px;top:4px"><svg class="abs" style="left:0;top:0" width="11" height="11" viewBox="0 0 11 11"><path d="M2.3,6.7 L4.6,8.9 L8.7,3.2" fill="none" stroke="#555" stroke-width="1.5"/></svg></span></div>
<div class="c l" style="left:44px;top:39px;width:105px"><span class="d nd">FE0001201900007...</span></div>
<div class="c l" style="left:149px;top:39px;width:70px"><span class="d dd">15/05/2019</span></div>
<div class="c l" style="left:219px;top:39px;width:105px"><span class="d dd">00105/2019</span></div>
<div class="c l" style="left:324px;top:39px;width:70px"><span class="d dd">31/05/2019</span></div>
<div class="c r" style="left:394px;top:39px;width:82px"><span class="d dr">95,39</span></div>
<div class="c r" style="left:476px;top:39px;width:82px"><span class="d dr">0</span></div>
<div class="c r" style="left:558px;top:39px;width:82px"><span class="d dr">95,39</span></div>
<div class="c r" style="left:640px;top:39px;width:79px"><span class="d dr">95,39</span></div>
<div class="c rh" style="left:0;top:61px;width:24px"></div>
<div class="c alt" style="left:24px;top:61px;width:20px"><span class="cb" style="left:3px;top:4px"><svg class="abs" style="left:0;top:0" width="11" height="11" viewBox="0 0 11 11"><path d="M2.3,6.7 L4.6,8.9 L8.7,3.2" fill="none" stroke="#555" stroke-width="1.5"/></svg></span></div>
<div class="c alt l" style="left:44px;top:61px;width:105px"><span class="d nd">FE0001201900009...</span></div>
<div class="c alt l" style="left:149px;top:61px;width:70px"><span class="d dd">17/06/2019</span></div>
<div class="c alt l" style="left:219px;top:61px;width:105px"><span class="d dd">00134/2019</span></div>
<div class="c alt l" style="left:324px;top:61px;width:70px"><span class="d dd">30/06/2019</span></div>
<div class="c alt r" style="left:394px;top:61px;width:82px"><span class="d dr">100,8</span></div>
<div class="c alt r" style="left:476px;top:61px;width:82px"><span class="d dr">0</span></div>
<div class="c alt r" style="left:558px;top:61px;width:82px"><span class="d dr">100,8</span></div>
<div class="c alt r" style="left:640px;top:61px;width:79px"><span class="d dr"></span></div>
<div class="c rh" style="left:0;top:83px;width:24px"></div>
<div class="c" style="left:24px;top:83px;width:20px"><span class="cb" style="left:3px;top:4px"></span></div>
<div class="c l" style="left:44px;top:83px;width:105px"><span class="d nd">FE0001201900011...</span></div>
<div class="c l" style="left:149px;top:83px;width:70px"><span class="d dd">16/07/2019</span></div>
<div class="c l" style="left:219px;top:83px;width:105px"><span class="d dd">00162/2019</span></div>
<div class="c l" style="left:324px;top:83px;width:70px"><span class="d dd">31/07/2019</span></div>
<div class="c r" style="left:394px;top:83px;width:82px"><span class="d dr">141,46</span></div>
<div class="c r" style="left:476px;top:83px;width:82px"><span class="d dr">0</span></div>
<div class="c r" style="left:558px;top:83px;width:82px"><span class="d dr">141,46</span></div>
<div class="c r" style="left:640px;top:83px;width:79px"><span class="d dr"></span></div>
<div class="c rh" style="left:0;top:105px;width:24px"></div>
<div class="c alt" style="left:24px;top:105px;width:20px"><span class="cb" style="left:3px;top:4px"></span></div>
<div class="c alt l" style="left:44px;top:105px;width:105px"><span class="d nd">FE0001201900015...</span></div>
<div class="c alt l" style="left:149px;top:105px;width:70px"><span class="d dd">20/09/2019</span></div>
<div class="c alt l" style="left:219px;top:105px;width:105px"><span class="d dd">00224/2019</span></div>
<div class="c alt l" style="left:324px;top:105px;width:70px"><span class="d dd">30/09/2019</span></div>
<div class="c alt r" style="left:394px;top:105px;width:82px"><span class="d dr">148,32</span></div>
<div class="c alt r" style="left:476px;top:105px;width:82px"><span class="d dr">0</span></div>
<div class="c alt r" style="left:558px;top:105px;width:82px"><span class="d dr">148,32</span></div>
<div class="c alt r" style="left:640px;top:105px;width:79px"><span class="d dr"></span></div>
<div class="c rh" style="left:0;top:127px;width:24px"></div>
<div class="c" style="left:24px;top:127px;width:20px"><span class="cb" style="left:3px;top:4px"></span></div>
<div class="c l" style="left:44px;top:127px;width:105px"><span class="d nd">FE0001201900016...</span></div>
<div class="c l" style="left:149px;top:127px;width:70px"><span class="d dd">16/10/2019</span></div>
<div class="c l" style="left:219px;top:127px;width:105px"><span class="d dd">00251/2019</span></div>
<div class="c l" style="left:324px;top:127px;width:70px"><span class="d dd">31/10/2019</span></div>
<div class="c r" style="left:394px;top:127px;width:82px"><span class="d dr">103,2</span></div>
<div class="c r" style="left:476px;top:127px;width:82px"><span class="d dr">0</span></div>
<div class="c r" style="left:558px;top:127px;width:82px"><span class="d dr">103,2</span></div>
<div class="c r" style="left:640px;top:127px;width:79px"><span class="d dr"></span></div>
<div class="c rh" style="left:0;top:149px;width:24px"></div>
<div class="c alt" style="left:24px;top:149px;width:20px"><span class="cb" style="left:3px;top:4px"><svg class="abs" style="left:0;top:0" width="11" height="11" viewBox="0 0 11 11"><path d="M2.3,6.7 L4.6,8.9 L8.7,3.2" fill="none" stroke="#555" stroke-width="1.5"/></svg></span></div>
<div class="c alt l" style="left:44px;top:149px;width:105px"><span class="d nd">FE0001201900012...</span></div>
<div class="c alt l" style="left:149px;top:149px;width:70px"><span class="d dd">06/08/2019</span></div>
<div class="c alt l" style="left:219px;top:149px;width:105px"><span class="d dd">00185/2019</span></div>
<div class="c alt l" style="left:324px;top:149px;width:70px"><span class="d dd">31/08/2019</span></div>
<div class="c alt r" style="left:394px;top:149px;width:82px"><span class="d dr">-4,4</span></div>
<div class="c alt r" style="left:476px;top:149px;width:82px"><span class="d dr">0</span></div>
<div class="c alt r" style="left:558px;top:149px;width:82px"><span class="d dr">-4,4</span></div>
<div class="c alt r" style="left:640px;top:149px;width:79px"><span class="d dr"></span></div>
<div class="c rh" style="left:0;top:171px;width:24px"></div>
<div class="c" style="left:24px;top:171px;width:20px"><span class="cb" style="left:3px;top:4px"></span></div>
<div class="c l" style="left:44px;top:171px;width:105px"><span class="d nd">FE0001201900019...</span></div>
<div class="c l" style="left:149px;top:171px;width:70px"><span class="d dd">22/11/2019</span></div>
<div class="c l" style="left:219px;top:171px;width:105px"><span class="d dd">00287/2019</span></div>
<div class="c l" style="left:324px;top:171px;width:70px"><span class="d dd">30/11/2019</span></div>
<div class="c r" style="left:394px;top:171px;width:82px"><span class="d dr">93,48</span></div>
<div class="c r" style="left:476px;top:171px;width:82px"><span class="d dr">0</span></div>
<div class="c r" style="left:558px;top:171px;width:82px"><span class="d dr">93,48</span></div>
<div class="c r" style="left:640px;top:171px;width:79px"><span class="d dr"></span></div>
<div class="c rh" style="left:0;top:193px;width:24px"></div>
<div class="c alt" style="left:24px;top:193px;width:20px"><span class="cb" style="left:3px;top:4px"><svg class="abs" style="left:0;top:0" width="11" height="11" viewBox="0 0 11 11"><path d="M2.3,6.7 L4.6,8.9 L8.7,3.2" fill="none" stroke="#555" stroke-width="1.5"/></svg></span></div>
<div class="c alt l" style="left:44px;top:193px;width:105px"><span class="d nd">FE0001201900021...</span></div>
<div class="c alt l" style="left:149px;top:193px;width:70px"><span class="d dd">18/12/2019</span></div>
<div class="c alt l" style="left:219px;top:193px;width:105px"><span class="d dd">00320/2019</span></div>
<div class="c alt l" style="left:324px;top:193px;width:70px"><span class="d dd">31/12/2019</span></div>
<div class="c alt r" style="left:394px;top:193px;width:82px"><span class="d dr">96,54</span></div>
<div class="c alt r" style="left:476px;top:193px;width:82px"><span class="d dr">0</span></div>
<div class="c alt r" style="left:558px;top:193px;width:82px"><span class="d dr">96,54</span></div>
<div class="c alt r" style="left:640px;top:193px;width:79px"><span class="d dr"></span></div>
<div class="c rh" style="left:0;top:215px;width:24px"></div>
<div class="c" style="left:24px;top:215px;width:20px"><span class="cb" style="left:3px;top:4px"><svg class="abs" style="left:0;top:0" width="11" height="11" viewBox="0 0 11 11"><path d="M2.3,6.7 L4.6,8.9 L8.7,3.2" fill="none" stroke="#555" stroke-width="1.5"/></svg></span></div>
<div class="c l" style="left:44px;top:215px;width:105px"><span class="d nd">FE0001201900005...</span></div>
<div class="c l" style="left:149px;top:215px;width:70px"><span class="d dd">12/04/2019</span></div>
<div class="c l" style="left:219px;top:215px;width:105px"><span class="d dd">00523/2019</span></div>
<div class="c l" style="left:324px;top:215px;width:70px"><span class="d dd">30/04/2019</span></div>
<div class="c r" style="left:394px;top:215px;width:82px"><span class="d dr">93,53</span></div>
<div class="c r" style="left:476px;top:215px;width:82px"><span class="d dr">0</span></div>
<div class="c r" style="left:558px;top:215px;width:82px"><span class="d dr">93,53</span></div>
<div class="c r" style="left:640px;top:215px;width:79px"><span class="d dr"></span></div>
<div class="c rh" style="left:0;top:237px;width:24px"></div>
<div class="c alt" style="left:24px;top:237px;width:20px"><span class="cb" style="left:3px;top:4px"></span></div>
<div class="c alt l" style="left:44px;top:237px;width:105px"><span class="d nd">FE0001201900007...</span></div>
<div class="c alt l" style="left:149px;top:237px;width:70px"><span class="d dd">15/05/2019</span></div>
<div class="c alt l" style="left:219px;top:237px;width:105px"><span class="d dd">00524/2019</span></div>
<div class="c alt l" style="left:324px;top:237px;width:70px"><span class="d dd">31/05/2019</span></div>
<div class="c alt r" style="left:394px;top:237px;width:82px"><span class="d dr">95,39</span></div>
<div class="c alt r" style="left:476px;top:237px;width:82px"><span class="d dr">0</span></div>
<div class="c alt r" style="left:558px;top:237px;width:82px"><span class="d dr">95,39</span></div>
<div class="c alt r" style="left:640px;top:237px;width:79px"><span class="d dr"></span></div>
<div class="c rh" style="left:0;top:259px;width:24px"></div>
<div class="c" style="left:24px;top:259px;width:20px"><span class="cb" style="left:3px;top:4px"></span></div>
<div class="c l" style="left:44px;top:259px;width:105px"><span class="d nd">FE0001201900009...</span></div>
<div class="c l" style="left:149px;top:259px;width:70px"><span class="d dd">17/06/2019</span></div>
<div class="c l" style="left:219px;top:259px;width:105px"><span class="d dd">00525/2019</span></div>
<div class="c l" style="left:324px;top:259px;width:70px"><span class="d dd">30/06/2019</span></div>
<div class="c r" style="left:394px;top:259px;width:82px"><span class="d dr">100,8</span></div>
<div class="c r" style="left:476px;top:259px;width:82px"><span class="d dr">0</span></div>
<div class="c r" style="left:558px;top:259px;width:82px"><span class="d dr">100,8</span></div>
<div class="c r" style="left:640px;top:259px;width:79px"><span class="d dr"></span></div>
<div class="abs" style="left:717px;top:0;width:17px;height:267px;background:#fff"></div>
<div class="sbb" style="left:718px;top:1.5px;width:15px;height:16px"><svg class="abs" style="left:2.0px;top:3.7px" width="9" height="5" viewBox="0 0 9 5"><polygon points="0,5 4.5,0 9,5" fill="#8a8a8a"/></svg></div>
<div class="sb" style="left:718px;top:18.5px;width:15px;height:126px"></div>
<div class="sbb" style="left:718px;top:249.5px;width:15px;height:16px"><svg class="abs" style="left:2.0px;top:3.7px" width="9" height="5" viewBox="0 0 9 5"><polygon points="0,0 9,0 4.5,5" fill="#8a8a8a"/></svg></div>
</div>
<div class="g2" style="left:759px;top:444px;width:505px;height:211px">
<div class="band" style="width:485px">Ricerca Piano dei Conti</div>
<div class="c h l" style="left:0px;top:18px;width:24px"><svg class="abs" style="left:10px;top:7px" width="11" height="11" viewBox="0 0 11 11"><polygon points="11,0 11,11 0,11" fill="#6b1c1c"/></svg></div>
<div class="c h l" style="left:24px;top:18px;width:270px">Descrizione</div>
<div class="c h l" style="left:294px;top:18px;width:80px">Codice</div>
<div class="c h l" style="left:374px;top:18px;width:55px">Gruppo</div>
<div class="c h l" style="left:429px;top:18px;width:59px">Tipo</div>
<div class="c rh" style="left:0;top:39px;width:24px"></div>
<div class="c l" style="left:24px;top:39px;width:270px;"><span class="d ds">ACQUISTO BANCHE DATI</span></div>
<div class="c l" style="left:294px;top:39px;width:80px;"><span class="d dn">57003</span></div>
<div class="c l" style="left:374px;top:39px;width:55px;"><span class="d dn">E</span></div>
<div class="c l" style="left:429px;top:39px;width:59px;"><span class="d dn">C</span></div>
<div class="c rh" style="left:0;top:61px;width:24px"><svg class="abs" style="left:3px;top:7px" width="4.5" height="8" viewBox="0 0 5 9"><polygon points="0,0 5,4.5 0,9" fill="#000"/></svg></div>
<div class="c alt l" style="left:24px;top:61px;width:270px;background:#4a80c4;color:#fff;height:21px;width:269px;"><span class="d ds">BANCO POPOLARE</span></div>
<div class="c alt l" style="left:294px;top:61px;width:80px;"><span class="d dn">24001</span></div>
<div class="c alt l" style="left:374px;top:61px;width:55px;"><span class="d dn">P</span></div>
<div class="c alt l" style="left:429px;top:61px;width:59px;"><span class="d dn">A</span></div>
<div class="c rh" style="left:0;top:83px;width:24px"></div>
<div class="c l" style="left:24px;top:83px;width:270px;"><span class="d ds">FINANZIAMENTI BANCARI M/L</span></div>
<div class="c l" style="left:294px;top:83px;width:80px;"><span class="d dn">43002</span></div>
<div class="c l" style="left:374px;top:83px;width:55px;"><span class="d dn">P</span></div>
<div class="c l" style="left:429px;top:83px;width:59px;"><span class="d dn">P</span></div>
<div class="c rh" style="left:0;top:105px;width:24px"></div>
<div class="c alt l" style="left:24px;top:105px;width:270px;"><span class="d ds">INTERESSI ATTIVI BANCARI</span></div>
<div class="c alt l" style="left:294px;top:105px;width:80px;"><span class="d dn">67002</span></div>
<div class="c alt l" style="left:374px;top:105px;width:55px;"><span class="d dn">E</span></div>
<div class="c alt l" style="left:429px;top:105px;width:59px;"><span class="d dn">R</span></div>
<div class="c rh" style="left:0;top:127px;width:24px"></div>
<div class="c l" style="left:24px;top:127px;width:270px;"><span class="d ds">ONERI BANCARI SU ANTICIPI</span></div>
<div class="c l" style="left:294px;top:127px;width:80px;"><span class="d dn">68005</span></div>
<div class="c l" style="left:374px;top:127px;width:55px;"><span class="d dn">E</span></div>
<div class="c l" style="left:429px;top:127px;width:59px;"><span class="d dn">C</span></div>
<div class="c rh" style="left:0;top:149px;width:24px"></div>
<div class="c alt l" style="left:24px;top:149px;width:270px;"><span class="d ds">ONERI BANCARI SU C/C ORDINARI</span></div>
<div class="c alt l" style="left:294px;top:149px;width:80px;"><span class="d dn">68004</span></div>
<div class="c alt l" style="left:374px;top:149px;width:55px;"><span class="d dn">E</span></div>
<div class="c alt l" style="left:429px;top:149px;width:59px;"><span class="d dn">C</span></div>
<div class="c rh" style="left:0;top:171px;width:24px"></div>
<div class="c l" style="left:24px;top:171px;width:270px;"><span class="d ds">SPESE BANCARIE</span></div>
<div class="c l" style="left:294px;top:171px;width:80px;"><span class="d dn">59044</span></div>
<div class="c l" style="left:374px;top:171px;width:55px;"><span class="d dn">E</span></div>
<div class="c l" style="left:429px;top:171px;width:59px;"><span class="d dn">C</span></div>
<div class="c rh" style="left:0;top:193px;width:24px"></div>
<div class="c alt l" style="left:24px;top:193px;width:270px;"><span class="d ds">VENDITA SERVIZI BANCHE DATI</span></div>
<div class="c alt l" style="left:294px;top:193px;width:80px;"><span class="d dn">54509</span></div>
<div class="c alt l" style="left:374px;top:193px;width:55px;"><span class="d dn">E</span></div>
<div class="c alt l" style="left:429px;top:193px;width:59px;"><span class="d dn">R</span></div>
<div class="abs" style="left:486px;top:0;width:17px;height:209px;background:#fff"></div>
<div class="sbb" style="left:487px;top:1.5px;width:15px;height:17px"><svg class="abs" style="left:2.0px;top:4.2px" width="9" height="5" viewBox="0 0 9 5"><polygon points="0,5 4.5,0 9,5" fill="#8a8a8a"/></svg></div>
<div class="sb" style="left:487px;top:18.5px;width:15px;height:167px"></div>
<div class="sbb" style="left:487px;top:191px;width:15px;height:17px"><svg class="abs" style="left:2.0px;top:4.2px" width="9" height="5" viewBox="0 0 9 5"><polygon points="0,0 9,0 4.5,5" fill="#8a8a8a"/></svg></div>
</div>
<div class="t lbl" style="left:19.099999999999998px;top:400px;;letter-spacing:-0.04px">Squadratura</div>
<div class="in" style="left:93px;top:395px;width:123px;height:23px;border-color:#808080"></div>
<div class="t lbl" style="left:241.7px;top:400px;;letter-spacing:-0.043px">Numero Registrazione</div>
<div class="in" style="left:366px;top:395px;width:103px;height:23px;border-color:#808080"></div>
<span class="radio on" style="left:494px;top:399px"></span>
<div class="t lbl" style="left:513.45px;top:399px;;letter-spacing:-0.042px">Solo Aperte</div>
<span class="radio" style="left:583px;top:399px"></span>
<div class="t lbl" style="left:602.2px;top:399px;;letter-spacing:-0.172px">Solo Chiuse</div>
<span class="radio" style="left:673px;top:399px"></span>
<div class="t lbl" style="left:692.2px;top:399px;;letter-spacing:-0.194px">Entrambe</div>
<div class="btn" style="left:1134px;top:400px;width:60px;height:38px"></div>
<svg class="abs" style="left:1148px;top:404.5px;" width="32" height="28" viewBox="0 0 32 28"><path d="M1,14.6 L4.6,10.6 L11.6,17.6 C15,10.5 21,4 26.6,.6 L30.4,3.6 C23,10 17,19 12.8,27.4Z" fill="url(#gChk)" stroke="#0c7a18" stroke-width=".5" stroke-linejoin="round"/></svg>
<div class="btn" style="left:1200px;top:400px;width:60px;height:38px"></div>
<svg class="abs" style="left:1213px;top:402.6px;" width="34" height="32" viewBox="0 0 34 32"><rect x="1" y="7.5" width="30" height="21" rx="3.5" fill="#ececec" stroke="#a8a8a8" stroke-width=".9"/>
<rect x="5.5" y="11.5" width="20" height="13.5" fill="#4ab4e6"/>
<path d="M9,28.5 h13 v2 q-6.5,1.5 -13,0z" fill="#d4d4d4" stroke="#b0b0b0" stroke-width=".4"/>
<path d="M29.6,.6 Q31.6,.2 32.4,2 L26.6,12.6 L23,10.8Z" fill="#c88a30" stroke="#9a6418" stroke-width=".5"/>
<circle cx="30.4" cy="2.8" r=".7" fill="#fff"/>
<path d="M20.5,11 L28.5,15.5 C28,22 24,29 18.5,31.4 C13,31.6 6.5,29 2.6,24.6 C9.5,22.5 17,17.5 20.5,11Z" fill="url(#gBroom)" stroke="#b08800" stroke-width=".5"/>
<path d="M6.5,25.6 L19.5,14.6 M10.5,27.8 L22.5,16.4 M14.6,29.8 L25.4,17.4 M4.6,24.4 L17.6,13.6" stroke="#c49600" stroke-width=".6" fill="none"/>
<path d="M18.8,11.6 L27.6,16.6 L29.2,13.4 L20.6,8.6Z" fill="#e01828" stroke="#a00010" stroke-width=".3"/></svg>
<div class="t lbl" style="left:24.099999999999998px;top:710px;;letter-spacing:-0.125px">Partita</div>
<div class="in" style="left:67px;top:705px;width:119px;height:22px;border-color:#9a9a9a"></div>
<div class="t lbl" style="left:207.2px;top:710px;;letter-spacing:-0.117px">Residuo</div>
<div class="in" style="left:258px;top:705px;width:119px;height:22px;border-color:#a2a2a2;box-shadow:inset 0 0 0 2px #ffffd6"></div>
<div class="t lbl" style="left:420.95px;top:710px;;letter-spacing:-0.21px">Pagamento</div>
<div class="in" style="left:494px;top:705px;width:119px;height:22px;border-color:#9a9a9a"></div>
<div class="btn" style="left:619px;top:703px;width:44px;height:28px"></div>
<svg class="abs" style="left:629px;top:706px;" width="25" height="21" viewBox="0 0 32 28"><path d="M1,14.6 L4.6,10.6 L11.6,17.6 C15,10.5 21,4 26.6,.6 L30.4,3.6 C23,10 17,19 12.8,27.4Z" fill="url(#gChk)" stroke="#0c7a18" stroke-width=".5" stroke-linejoin="round"/></svg>
<div class="in" style="left:759px;top:659px;width:411px;height:22px;"><span class="t" style="left:2px;top:3px;font-size:10.3px">BANCO</span></div>
<div class="btn" style="left:1176px;top:658px;width:40px;height:26px"></div>
<svg class="abs" style="left:1187px;top:661px;" width="19" height="19" viewBox="0 0 20 20"><path d="M9.5,10.5 L3,17" stroke="#c87a10" stroke-width="3" stroke-linecap="round"/><path d="M9,10.5 L3,16.5" stroke="#ffc050" stroke-width="1.2" stroke-linecap="round"/>
<circle cx="13" cy="6.8" r="5.6" fill="url(#gLens)" stroke="#5aa0f8" stroke-width="1.2"/></svg>
<div class="btn" style="left:1221px;top:658px;width:40px;height:26px"></div>
<svg class="abs" style="left:1232px;top:661px;" width="19" height="19" viewBox="0 0 34 32"><rect x="1" y="7.5" width="30" height="21" rx="3.5" fill="#ececec" stroke="#a8a8a8" stroke-width=".9"/>
<rect x="5.5" y="11.5" width="20" height="13.5" fill="#4ab4e6"/>
<path d="M9,28.5 h13 v2 q-6.5,1.5 -13,0z" fill="#d4d4d4" stroke="#b0b0b0" stroke-width=".4"/>
<path d="M29.6,.6 Q31.6,.2 32.4,2 L26.6,12.6 L23,10.8Z" fill="#c88a30" stroke="#9a6418" stroke-width=".5"/>
<circle cx="30.4" cy="2.8" r=".7" fill="#fff"/>
<path d="M20.5,11 L28.5,15.5 C28,22 24,29 18.5,31.4 C13,31.6 6.5,29 2.6,24.6 C9.5,22.5 17,17.5 20.5,11Z" fill="url(#gBroom)" stroke="#b08800" stroke-width=".5"/>
<path d="M6.5,25.6 L19.5,14.6 M10.5,27.8 L22.5,16.4 M14.6,29.8 L25.4,17.4 M4.6,24.4 L17.6,13.6" stroke="#c49600" stroke-width=".6" fill="none"/>
<path d="M18.8,11.6 L27.6,16.6 L29.2,13.4 L20.6,8.6Z" fill="#e01828" stroke="#a00010" stroke-width=".3"/></svg>
<div class="grp" style="left:759px;top:688px;width:306px;height:32px"></div>
<div class="t lbl" style="left:767.5px;top:681px;background:#f3f7fe;padding:0 5px 0 1px;margin-left:-1px;letter-spacing:-0.464px">Ricerca</div>
<span class="radio" style="left:768px;top:700px"></span>
<div class="t lbl" style="left:786.95px;top:700px;;letter-spacing:0.164px">Clienti</div>
<span class="radio" style="left:825px;top:700px"></span>
<div class="t lbl" style="left:843.9000000000001px;top:700px;;letter-spacing:0.327px">Fornitori</div>
<span class="radio" style="left:895px;top:700px"></span>
<div class="t lbl" style="left:914.4000000000001px;top:700px;;letter-spacing:-0.038px">Professionisti</div>
<span class="radio on" style="left:989px;top:700px"></span>
<div class="t lbl" style="left:1008.5px;top:700px;;letter-spacing:-0.124px">Generali</div>
<div class="grp" style="left:1076px;top:688px;width:188px;height:31px"></div>
<div class="t lbl" style="left:1084.7px;top:681px;background:#f3f7fe;padding:0 4px 0 1px;margin-left:-1px;letter-spacing:0.294px">Ordina</div>
<span class="radio on" style="left:1082px;top:700px"></span>
<div class="t lbl" style="left:1101.3px;top:700px;;letter-spacing:-0.188px">Descrizione</div>
<span class="radio" style="left:1180px;top:700px"></span>
<div class="t lbl" style="left:1199.3px;top:700px;;letter-spacing:-0.362px">Codice</div>
<div id="frame"></div>
</body></html>
